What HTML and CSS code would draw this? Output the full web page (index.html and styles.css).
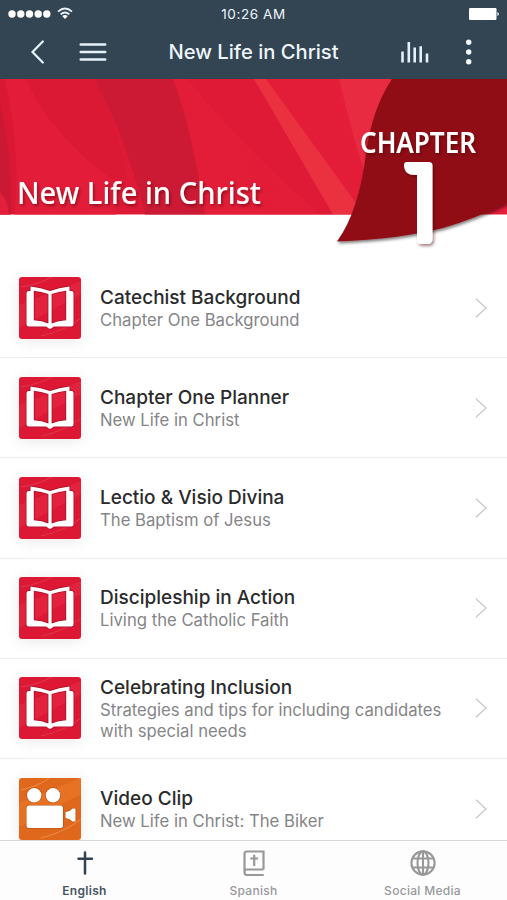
FILE: index.html
```html
<!DOCTYPE html>
<html lang="en">
<head>
<meta charset="utf-8">
<title>New Life in Christ</title>
<link rel="stylesheet" href="styles.css">
</head>
<body>
<svg class="sprite" aria-hidden="true">
  <symbol id="book" viewBox="0 0 62 62">
    <rect width="62" height="62" rx="3" fill="#dc1834"/>
    <path d="M0 28L62 4V17L0 51Z" fill="#e3233d"/>
    <path d="M2 10Q20 7 33 0M22 59Q46 54 62 41" fill="none" stroke="#ee5262" stroke-width="1" opacity=".5"/>
    <g fill="#fff" fill-rule="evenodd" stroke="#a90f29" stroke-width="1.5" paint-order="stroke">
      <path d="M11.5 9.5Q22 10.5 31 14Q40 10.5 50.5 9.5V14H52.5Q54.5 14 54.5 16V47.5Q54.5 49.5 52.5 49.5H36Q34 49.5 33.5 50.5Q31 53 28.5 50.5Q28 49.5 26 49.5H9.5Q7.500 49.5 7.500 47.500V16Q7.500 14 9.500 14H11.500ZM14.800 13.800V43.200Q23 43.500 29.400 46.500V17Q22 14.500 14.800 13.800ZM47.200 13.800V43.200Q39 43.500 32.600 46.500V17Q40 14.500 47.200 13.800Z"/>
    </g>
  </symbol>
  <symbol id="video" viewBox="0 0 62 62">
    <rect width="62" height="62" rx="3" fill="#df681c"/>
    <path d="M0 25L62 0V16L0 49Z" fill="#e77223"/>
    <path d="M2 12Q20 8 30 0M22 60Q46 54 62 41" fill="none" stroke="#f19a58" stroke-width="1" opacity=".75"/>
    <g fill="#fff" stroke="#b34c10" stroke-width="1.2" paint-order="stroke">
      <circle cx="15.200" cy="17.300" r="7.200"/><circle cx="34" cy="17.300" r="7.200"/>
      <rect x="7.500" y="27.500" width="36.500" height="22.500" rx="2.500"/>
      <path d="M46.500 34Q51 33.500 53.500 30.500H56.500V43.500H53.500Q51 40.500 46.500 40Z"/>
    </g>
  </symbol>
  <symbol id="chevron" viewBox="0 0 12 20"><path d="M1 .8L11 10L1 19.200" fill="none" stroke="#c9c9cb" stroke-width="1.300"/></symbol>
</svg>
<div class="app">
  <header class="header">
    <div class="status">
      <svg class="signal" width="66" height="16" viewBox="0 0 66 16" fill="#fff">
        <circle cx="4" cy="8" r="3.700"/><circle cx="12.800" cy="8" r="3.700"/><circle cx="21.500" cy="8" r="3.700"/><circle cx="30.200" cy="8" r="3.700"/><circle cx="38.800" cy="8" r="3.700"/>
        <g fill="none" stroke="#e8f1f7" stroke-width="1.900"><path d="M50 5.600Q57 -.5 64 5.600M52.600 8.400Q57 4.600 61.400 8.400"/></g>
        <path d="M54.200 10.100Q57 8 59.800 10.100L57 13Z"/>
      </svg>
      <span class="time">10:26 AM</span>
      <svg class="battery" width="31" height="12" viewBox="0 0 31 12"><rect width="27.500" height="12" rx="1.200" fill="#fff"/><path d="M28.300 4Q30 4.500 30 6T28.300 8Z" fill="#e1e8ed"/></svg>
    </div>
    <nav class="nav">
      <div class="nav-left">
        <svg width="14" height="24" viewBox="0 0 14 24"><path d="M11.800 1.500L1.500 12L11.800 22.500" fill="none" stroke="#e3f1fa" stroke-width="2.300" stroke-linecap="round"/></svg>
        <svg width="28" height="20" viewBox="0 0 28 20"><path d="M1.700 2.500H26.200M1.700 10H26.200M1.700 17.500H26.200" stroke="#e3f1fa" stroke-width="2.500" stroke-linecap="round"/></svg>
      </div>
      <h1 class="title">New Life in Christ</h1>
      <div class="nav-right">
        <svg width="28" height="22" viewBox="0 0 28 22"><path d="M1.500 10.500V21.500M7.800 1V21.500M13.700 6.500V21.500M19.700 5.300V21.500M26 12.500V21.500" stroke="#e3f1fa" stroke-width="2.600"/></svg>
        <svg width="6" height="26" viewBox="0 0 6 26" fill="#f4faff"><circle cx="2.700" cy="3.200" r="2.700"/><circle cx="2.700" cy="13" r="2.700"/><circle cx="2.700" cy="22.800" r="2.700"/></svg>
      </div>
    </nav>
  </header>
  <svg class="banner" width="507" height="178" viewBox="0 0 507 178">
    <defs>
      <linearGradient id="red"><stop offset="0" stop-color="#da1834"/><stop offset=".55" stop-color="#e31c38"/><stop offset="1" stop-color="#e51e3b"/></linearGradient>
      <filter id="shade" x="-10%" y="-20%" width="130%" height="150%"><feDropShadow dx="1.500" dy="2" stdDeviation="1.500" flood-color="#400" flood-opacity=".5"/></filter>
      <filter id="flag" x="-10%" y="-10%" width="120%" height="120%"><feDropShadow dx="1" dy="2" stdDeviation="1.500" flood-opacity=".5"/></filter>
    </defs>
    <rect width="507" height="135.500" fill="url(#red)"/>
    <path d="M5 0H26Q45 42 78 70L116 105V135.500H14Q22 80 5 0Z" fill="#e31d39"/>
    <path d="M0 25Q13 80 11 135.500H0Z" fill="#c91934"/>
    <path d="M0 114Q8 120 9 135.500H0Z" fill="#e41f3c"/>
    <path d="M26 0H94Q119 50 126 100L109 98Q55 60 26 0Z" fill="#dc1935"/>
    <path d="M94 0H173Q193 50 205 135.500H145Q127 60 94 0Z" fill="#cc1a34"/>
    <path d="M173 0H188L254 64V100L320 135.500H205Q192 50 173 0Z" fill="#e31c38"/>
    <path d="M188 0H254L333 135.500H320Q235 60 188 0Z" fill="#df1a36"/>
    <path d="M254 0H266L356 124L352 135.500H333Z" fill="#eb303f"/>
    <path d="M339 0H392L365 95Q352 55 339 0Z" fill="#e92b42"/>
    <path d="M392 0H507V124Q477 139 443 149Q400 160 337 162.500Q359 132 366 75Q372 30 392 0Z" fill="#900e12" filter="url(#flag)"/>
    <g class="banner-type" fill="#fff" filter="url(#shade)">
      <text x="17" y="125" font-size="31" font-weight="500" textLength="244" lengthAdjust="spacingAndGlyphs">New Life in Christ</text>
      <text x="360" y="74" font-size="28" font-weight="600" textLength="116" lengthAdjust="spacingAndGlyphs">CHAPTER</text>
      <path d="M407 83H429Q432.500 83 432.500 86.500V160Q432.500 165 427 165H421Q417 165 417 161V96H415Q404 96 404 86Q404 83 407 83Z"/>
    </g>
  </svg>
  <main class="list">
    <article class="row"><svg class="thumb"><use href="#book"/></svg><div class="copy"><h2>Catechist Background</h2><p>Chapter One Background</p></div><svg class="chevron"><use href="#chevron"/></svg></article>
    <article class="row"><svg class="thumb"><use href="#book"/></svg><div class="copy"><h2>Chapter One Planner</h2><p>New Life in Christ</p></div><svg class="chevron"><use href="#chevron"/></svg></article>
    <article class="row"><svg class="thumb"><use href="#book"/></svg><div class="copy"><h2>Lectio &amp; Visio Divina</h2><p>The Baptism of Jesus</p></div><svg class="chevron"><use href="#chevron"/></svg></article>
    <article class="row"><svg class="thumb"><use href="#book"/></svg><div class="copy"><h2>Discipleship in Action</h2><p>Living the Catholic Faith</p></div><svg class="chevron"><use href="#chevron"/></svg></article>
    <article class="row"><svg class="thumb"><use href="#book"/></svg><div class="copy"><h2>Celebrating Inclusion</h2><p>Strategies and tips for including candidates with special needs</p></div><svg class="chevron"><use href="#chevron"/></svg></article>
    <article class="row"><svg class="thumb"><use href="#video"/></svg><div class="copy"><h2>Video Clip</h2><p>New Life in Christ: The Biker</p></div><svg class="chevron"><use href="#chevron"/></svg></article>
  </main>
  <footer class="tabs">
    <div class="tab active">
      <svg width="26" height="26" viewBox="0 0 26 26"><path d="M13 2.500V23.500M6.500 8.800H20" fill="none" stroke="#33424f" stroke-width="2.500" stroke-linecap="round"/></svg>
      <span>English</span>
    </div>
    <div class="tab">
      <svg width="26" height="26" viewBox="0 0 26 26" fill="none" stroke="#98989a" stroke-width="2.200"><path d="M22.500 19.500V1.500H6Q3.500 1.500 3.500 4V22Q3.500 25 6 25H22.700M3.500 22Q3.500 19.500 6 19.500H22.500M13.200 4.800V16M9.300 8.500H17.100"/></svg>
      <span>Spanish</span>
    </div>
    <div class="tab">
      <svg width="26" height="26" viewBox="0 0 26 26" fill="none" stroke="#98989a" stroke-width="2.100"><circle cx="13" cy="13" r="11.600"/><ellipse cx="13" cy="13" rx="5.500" ry="11.600"/><path d="M13 1V25M2.500 8.500H23.500M2.500 17.500H23.500"/></svg>
      <span>Social Media</span>
    </div>
  </footer>
</div>
</body>
</html>
```
FILE: styles.css
```css
* { box-sizing: border-box; }
body { margin: 0; background: #fff; font-family: Inter, "Liberation Sans", sans-serif; }
svg { display: block; flex: none; }
.sprite { display: none; }
.app { width: 507px; height: 900px; overflow: hidden; display: flex; flex-direction: column; }
.header { flex: none; height: 79px; background: #334452; color: #eef6fc; }
.status { height: 27px; padding: 0 7px 0 8px; display: grid; grid-template-columns: 1fr auto 1fr; align-items: center; }
.time { font-size: 13.5px; line-height: 27px; letter-spacing: .6px; padding-top: 1px; margin-right: 1px; }
.battery { justify-self: end; }
.nav { height: 50px; padding: 0 35px 0 31px; display: grid; grid-template-columns: 1fr auto 1fr; align-items: center; }
.nav-left { display: flex; align-items: center; gap: 34px; }
.nav-right { display: flex; align-items: center; justify-content: flex-end; gap: 37px; }
.title { margin: 0 0 0 4px; font-size: 20.2px; line-height: 26px; font-weight: 500; white-space: nowrap; }
.banner { background: #fff; }
.banner-type { font-family: "Noto Sans", sans-serif; }
.list { flex: 1; min-height: 0; padding-top: 1px; overflow: hidden; }
.row { height: 100.2px; padding: 0 20px 0 19px; border-bottom: 1px solid #ececee; display: flex; align-items: center; }
.thumb { width: 62px; height: 62px; margin-right: 19px; filter: drop-shadow(0 2px 7px rgba(0,0,0,.09)); }
.copy { flex: 1; }
.copy h2 { margin: 0; color: #2b2b2d; font-size: 19px; font-weight: 500; line-height: 25px; white-space: nowrap; }
.copy p { margin: 0; width: 360px; color: #858587; font-size: 16.7px; line-height: 20.5px; }
.chevron { width: 12px; height: 20px; }
.tabs { flex: none; height: 60px; border-top: 1px solid #d7d7d9; background: #fdfdfd; display: grid; grid-template-columns: repeat(3, 1fr); }
.tab { padding-top: 9px; display: flex; flex-direction: column; align-items: center; gap: 7px; color: #98989a; font-size: 12px; line-height: 16px; font-weight: 500; letter-spacing: .3px; }
.active { color: #465461; font-weight: 600; }
```
